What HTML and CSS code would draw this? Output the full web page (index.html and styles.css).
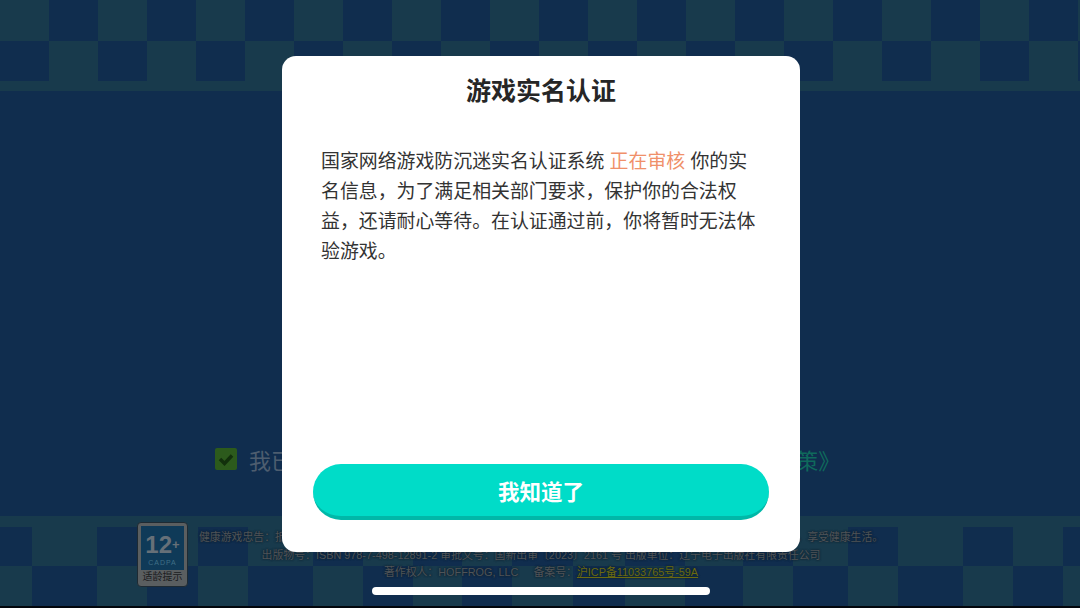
FILE: index.html
```html
<!DOCTYPE html>
<html lang="zh-CN">
<head>
<meta charset="UTF-8">
<meta name="viewport" content="width=device-width, initial-scale=1.0">
<title>游戏实名认证</title>
<link rel="stylesheet" href="styles.css">
</head>
<body>
  <div id="screen">
    <div class="top-band"></div>

    <div class="agree-row">
      <span class="check">
        <svg width="22" height="22" viewBox="0 0 22 22"><path d="M5 11l4.500 4.500L17 7.500" fill="none" stroke="#12300c" stroke-width="3.500"/></svg>
      </span>
      <span class="agree-text">我已阅读并同意</span><span class="agree-link">《用户协议》《隐私政策》《儿童隐私权政策》</span>
    </div>

    <div class="bottom-band">
      <div class="age-badge">
        <div class="age-inner">
          <div class="age-num">12<span class="age-plus">+</span></div>
          <div class="age-org">CADPA</div>
        </div>
        <div class="age-label">适龄提示</div>
      </div>
      <div class="notice">
        <p>健康游戏忠告：抵制不良游戏，拒绝盗版游戏。注意自我保护，谨防受骗上当。适度游戏益脑，沉迷游戏伤身。合理安排时间，享受健康生活。</p>
        <p>出版物号：ISBN 978-7-498-12891-2 审批文号：国新出审〔2023〕2161 号 出版单位：辽宁电子出版社有限责任公司</p>
        <p>著作权人：HOFFROG, LLC <span class="gap"></span> 备案号：<a class="icp">沪ICP备11033765号-59A</a></p>
      </div>
    </div>

    <div class="home-bar"></div>

    <!-- 弹窗盖在页面上 -->
    <div id="dialog">
      <h1>游戏实名认证</h1>
      <p class="msg">国家网络游戏防沉迷实名认证系统 <span class="hot">正在审核</span> 你的实名信息，为了满足相关部门要求，保护你的合法权益，还请耐心等待。在认证通过前，你将暂时无法体验游戏。</p>
      <button class="ok-btn">我知道了</button>
    </div>
  </div>
</body>
</html>
```

FILE: styles.css
```css
* {
  box-sizing: border-box;
}
html, body {
  margin: 0;
  padding: 0;
  height: 100%;
  background-color: #02060c;
}
body {
  font-family: "Liberation Sans", "Noto Sans CJK SC", sans-serif;
  overflow: hidden;
}
#screen {
  position: relative;
  width: 1080px;
  height: 606px;
  background-color: #102d4e;
  display: flex;
  flex-direction: column;
}

/* 棋盘格，两行方块的列宽不一样，所以写死色标 */
.top-band {
  height: 91px;
  background-color: #183a4c;
  background-image:
    repeating-linear-gradient(90deg, #183a4c 0 48.800px, #102d4e 48.800px 98px),
    repeating-linear-gradient(90deg, #102d4e 0 48.800px, #183a4c 48.800px 98px);
  background-size: 100% 41px, 100% 40px;
  background-position: 0 0, 0 41px;
  background-repeat: no-repeat;
}
.agree-row {
  height: 40px;
  margin-top: 348px;
  margin-left: 215px;
  display: flex;
  align-items: center;
  font-size: 21.900px;
  white-space: nowrap;
}
.check {
  width: 22px;
  height: 22px;
  margin-right: 12px;
  background-color: #2c5a1c;
  border-radius: 2px;
  flex: none;
}
.check svg {
  display: block;
}
.agree-text {
  color: #4d5d6f;
}
.agree-link {
  color: #0f6a5c;
}
.bottom-band {
  position: relative;
  margin-top: 37px;
  height: 90px;
  display: flex;
  padding: 6px 0 0 137px;
  background-color: #183a4c;
  background-image:
    linear-gradient(90deg, #102d4e 0 32px, #183a4c 32px 97px, #102d4e 97px 147px, #183a4c 147px 198px, #102d4e 198px 248px, #183a4c 248px 313px, #102d4e 313px 363px, #183a4c 363px 413px, #102d4e 413px 462px, #183a4c 462px 512px, #102d4e 512px 573px, #183a4c 573px 625px, #102d4e 625px 685px, #183a4c 685px 743px, #102d4e 743px 793px, #183a4c 793px 848px, #102d4e 848px 898px, #183a4c 898px 963px, #102d4e 963px 1013px, #183a4c 1013px 1063px, #102d4e 1063px),
    linear-gradient(90deg, #183a4c 0 32px, #102d4e 32px 97px, #183a4c 97px 147px, #102d4e 147px 198px, #183a4c 198px 248px, #102d4e 248px 313px, #183a4c 313px 363px, #102d4e 363px 413px, #183a4c 413px 462px, #102d4e 462px 512px, #183a4c 512px 573px, #102d4e 573px 625px, #183a4c 625px 685px, #102d4e 685px 743px, #183a4c 743px 793px, #102d4e 793px 848px, #183a4c 848px 898px, #102d4e 898px 963px, #183a4c 963px 1013px, #102d4e 1013px 1063px, #183a4c 1063px);
  background-size: 100% 39px, 100% 40px;
  background-position: 0 11px, 0 50px;
  background-repeat: no-repeat;
}
.age-badge {
  width: 51px;
  height: 65px;
  flex: none;
  background-color: #5a5e60;
  border: 1px solid #1e2a33;
  border-radius: 4px;
  padding: 3px 3px 0;
  text-align: center;
}
.age-inner {
  height: 44px;
  background-color: #0f3a58;
  color: #667078;
  overflow: hidden;
}
.age-num {
  font-size: 24px;
  font-weight: bold;
  line-height: 27px;
  margin-top: 5px;
  white-space: nowrap;
}
.age-plus {
  font-size: 13px;
  vertical-align: 4px;
}
.age-org {
  font-size: 7px;
  line-height: 9px;
  letter-spacing: 1px;
  color: #3f6f86;
}
.age-label {
  font-size: 10px;
  line-height: 14px;
  color: #1a1c20;
  white-space: nowrap;
}
.notice {
  flex: none;
  width: 684px;
  margin-left: 11px;
  text-align: center;
  color: #4f5458;
  font-size: 10.860px;
  text-shadow: 0 0 2px #10202e, 0 0 2px #10202e;
}
.notice p {
  margin: 0;
  height: 17.500px;
  line-height: 18px;
  white-space: nowrap;
}
.notice p:first-child {
  margin-top: 6px;
}
.gap {
  display: inline-block;
  width: 9px;
}
.icp {
  color: #6a6a10;
  text-decoration: underline;
}
.home-bar {
  position: absolute;
  left: 372px;
  top: 587px;
  width: 338px;
  height: 8px;
  border-radius: 4px;
  background-color: #fff;
}

#dialog {
  position: absolute;
  left: 282px;
  top: 56px;
  width: 518px;
  height: 496px;
  padding: 0 31px;
  border-radius: 14px;
  background-color: #fff;
  display: flex;
  flex-direction: column;
}
h1 {
  margin: 19px 0 0;
  font-size: 25px;
  line-height: 32px;
  text-align: center;
  color: #262626;
}
.msg {
  margin: 40px 0 0;
  padding: 0 8px;
  font-size: 18.900px;
  line-height: 30px;
  color: #333;
}
.hot {
  color: #f0906a;
}
.ok-btn {
  margin-top: auto;
  margin-bottom: 32px;
  height: 56px;
  padding-top: 1px;
  border: none;
  border-bottom: 4px solid #00b8a8;
  border-radius: 28px;
  background-color: #00dcc8;
  color: #fff;
  font-family: inherit;
  font-size: 21.500px;
  font-weight: bold;
}
```
